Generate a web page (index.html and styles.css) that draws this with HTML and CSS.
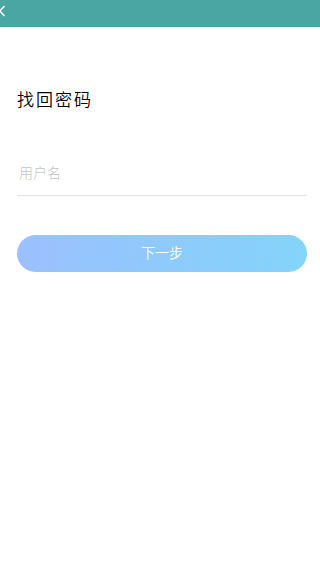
FILE: index.html
```html
<!DOCTYPE html>
<html lang="zh">
<head>
<meta charset="utf-8">
<link rel="stylesheet" href="styles.css">
</head>
<body>
<header class="topbar">
  <svg class="back" width="8" height="12" viewBox="0 0 8 12"><path d="M5.5 1 L0.8 6 L5.5 11" fill="none" stroke="#fff" stroke-width="1.4"/></svg>
</header>
<main class="content">
  <h1 class="title">找回密码</h1>
  <div class="field">
    <input class="input" type="text" placeholder="用户名">
  </div>
  <button class="next">下一步</button>
</main>
</body>
</html>
```
FILE: styles.css
```css
* { box-sizing: border-box; }
body {
  margin: 0;
  background: #fff;
  font-family: "Noto Sans CJK SC", "Noto Sans", sans-serif;
}
.topbar {
  height: 27px;
  background: #4aa6a2;
  display: flex;
  align-items: flex-start;
  padding-top: 5px;
}
.back { display: block; margin-left: -1px; }
.content {
  padding: 0 13px 0 17px;
}
.title {
  margin: 60px 0 0;
  font-size: 17px;
  font-weight: 350;
  letter-spacing: 2px;
  color: #000;
  line-height: 24px;
}
.field {
  margin-top: 45px;
  border-bottom: 1px solid #e3e3e3;
  height: 40px;
  display: flex;
  align-items: flex-start;
  padding-top: 6px;
}
.input {
  border: none;
  outline: none;
  font-family: inherit;
  font-weight: 300;
  font-size: 14px;
  line-height: 20px;
  height: 20px;
  padding: 0 0 0 2px;
  width: 100%;
  background: transparent;
}
.input::placeholder { color: #c4c4c4; }
.next {
  display: block;
  width: 100%;
  margin-top: 39px;
  height: 37px;
  border: none;
  border-radius: 19px;
  background: linear-gradient(100deg, #9dc0fe 0%, #8fcafc 50%, #83d4fb 100%);
  color: #fff;
  font-family: inherit;
  font-weight: 350;
  font-size: 14px;
  padding: 0 0 3px;
}
```
